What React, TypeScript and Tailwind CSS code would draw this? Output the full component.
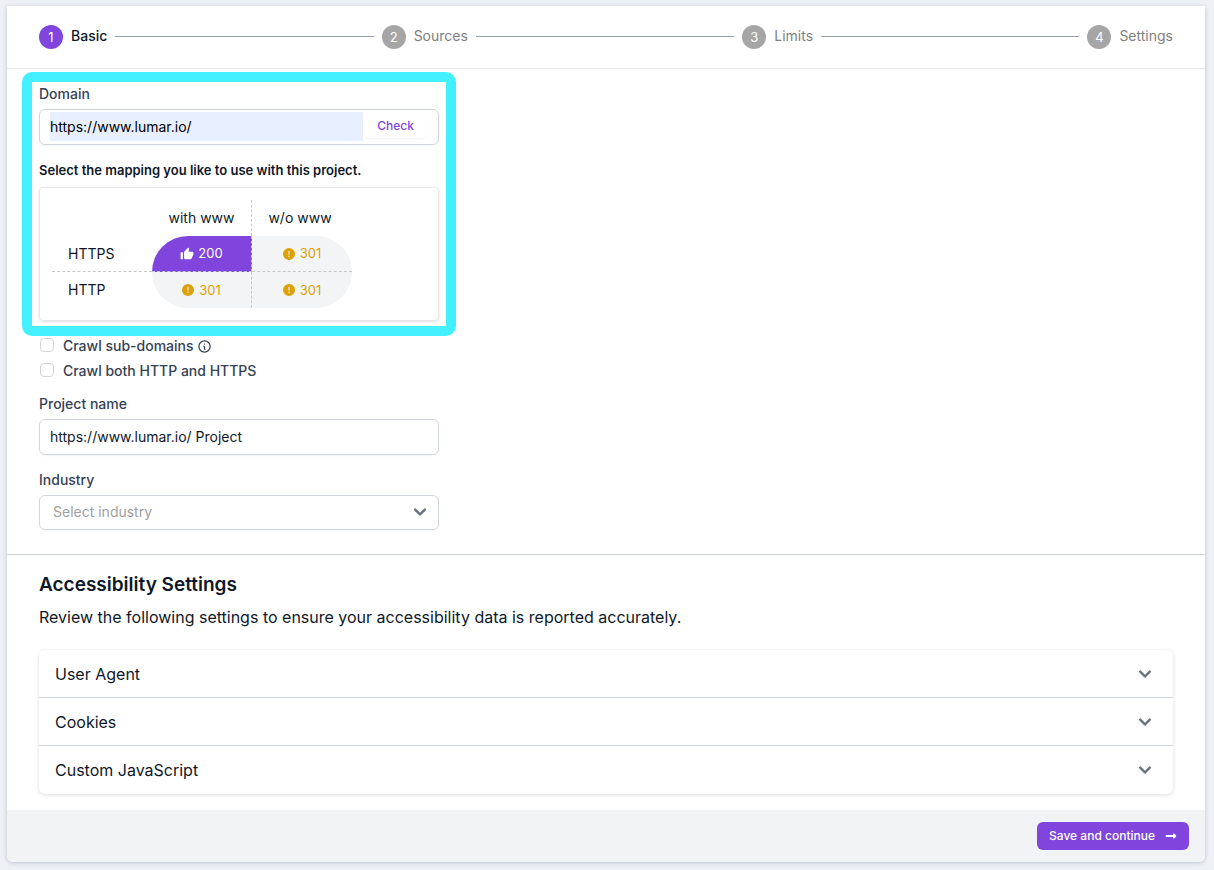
import React from "react";
import { BsExclamationCircleFill } from "react-icons/bs";
import { FaLongArrowAltRight } from "react-icons/fa";
import { HiChevronDown, HiOutlineInformationCircle } from "react-icons/hi";
import { MdThumbUp } from "react-icons/md";

const steps = ["Basic", "Sources", "Limits", "Settings"];
const accordions = ["User Agent", "Cookies", "Custom JavaScript"];

function Stepper() {
  return (
    <ol className="flex h-[63px] items-center gap-2 border-b border-gray-200 px-8 text-sm">
      {steps.map((name, i) => (
        <React.Fragment key={name}>
          {i > 0 && <li aria-hidden="true" className="mb-px h-px flex-1 bg-[#979fb0]" />}
          <li className="flex items-center gap-2" aria-current={i === 0 ? "step" : undefined}>
            <span
              className={
                i === 0
                  ? "flex size-6 items-center justify-center rounded-full bg-[#7f45dd] text-[13px] text-white"
                  : "flex size-6 items-center justify-center rounded-full bg-[#a6a6a6] text-[13px] text-white"
              }
            >
              {i + 1}
            </span>
            <span className={i === 0 ? "pb-0.5 font-medium text-gray-900" : "pb-0.5 text-[#7f7f7f]"}>{name}</span>
          </li>
        </React.Fragment>
      ))}
    </ol>
  );
}

function Redirect() {
  return (
    <span className="flex items-center justify-center gap-[5px] text-[13px] text-[#dca106]">
      <BsExclamationCircleFill className="size-3" />
      301
    </span>
  );
}

function MappingTable() {
  return (
    <div className="rounded border border-gray-200 p-3 shadow-sm">
      <table className="w-[300px] table-fixed border-separate border-spacing-0 text-sm text-gray-900">
        <thead>
          <tr className="h-9">
            <td />
            <th scope="col" className="border-r border-dashed border-[#c8c8c8] p-0 font-normal">
              with www
            </th>
            <th scope="col" className="p-0 pr-1 font-normal">
              w/o www
            </th>
          </tr>
        </thead>
        <tbody>
          <tr className="h-9">
            <th scope="row" className="border-b border-dashed border-[#c8c8c8] p-0 pl-4 text-left font-normal">
              HTTPS
            </th>
            <td className="rounded-tl-[36px] border-r border-b border-dashed border-[#c8c8c8] bg-[#7f45dd] p-0 text-white">
              <span className="flex items-center justify-center gap-1 text-[13px]">
                <MdThumbUp className="size-[14px]" />
                200
              </span>
            </td>
            <td className="rounded-tr-[36px] border-b border-dashed border-[#c8c8c8] bg-gray-100 p-0">
              <Redirect />
            </td>
          </tr>
          <tr className="h-9">
            <th scope="row" className="p-0 pl-4 text-left font-normal">
              HTTP
            </th>
            <td className="rounded-bl-[36px] border-r border-dashed border-[#c8c8c8] bg-gray-100 p-0">
              <Redirect />
            </td>
            <td className="rounded-br-[36px] bg-gray-100 p-0">
              <Redirect />
            </td>
          </tr>
        </tbody>
      </table>
    </div>
  );
}

export default function App() {
  return (
    <div className="min-h-screen bg-[#edf1f6] pt-[6px] pr-[9px] pb-2 pl-[7px] font-['Inter',sans-serif] text-gray-900">
      <main className="overflow-hidden rounded-b-md bg-white shadow-[0_1px_4px_rgba(60,60,90,0.25)]">
        <Stepper />

        <form className="flex flex-col border-b border-gray-300 px-8 pt-[15px] pb-6 text-sm">
          <div className="relative w-full max-w-[400px]">
            <div
              aria-hidden="true"
              className="pointer-events-none absolute -inset-x-[17px] -top-3 -bottom-[15px] rounded-[10px] border-10 border-[#42f0ff]"
            />
            <label htmlFor="domain" className="block font-medium text-gray-700">
              Domain
            </label>
            <div className="mt-[5px] flex h-9 items-center rounded-md border border-gray-300 px-[10px] pb-0.5 shadow-xs">
              <input
                id="domain"
                type="url"
                defaultValue="https://www.lumar.io/"
                className="h-[29px] min-w-0 flex-1 bg-[#e8effe] text-black outline-none"
              />
              <button type="button" className="h-6 rounded-md px-[14px] text-xs font-medium text-[#7f45dd] shadow-xs">
                Check
              </button>
            </div>
            <p className="mt-[15px] mb-[7px] text-[13px] leading-5 font-semibold">
              Select the mapping you like to use with this project.
            </p>
            <MappingTable />
          </div>

          <div className="mt-[15px] flex flex-col gap-[5px] font-medium text-gray-700">
            <div className="flex items-center gap-[3px]">
              <label className="flex items-center gap-[9px]">
                <input type="checkbox" className="mb-0.5 ml-px size-[14px] appearance-none rounded border border-gray-300" />
                Crawl sub-domains
              </label>
              <HiOutlineInformationCircle className="size-[15px]" />
            </div>
            <label className="flex items-center gap-[9px]">
              <input type="checkbox" className="mb-0.5 ml-px size-[14px] appearance-none rounded border border-gray-300" />
              Crawl both HTTP and HTTPS
            </label>
          </div>

          <label htmlFor="project" className="mt-[13px] font-medium text-gray-700">
            Project name
          </label>
          <input
            id="project"
            defaultValue="https://www.lumar.io/ Project"
            className="mt-[5px] h-9 w-full max-w-[400px] rounded-md border border-gray-300 px-[10px] pb-0.5 shadow-xs"
          />

          <label htmlFor="industry" className="mt-[15px] font-medium text-gray-700">
            Industry
          </label>
          <div className="mt-[5px] grid w-full max-w-[400px] items-center">
            <select
              id="industry"
              defaultValue=""
              className="col-start-1 row-start-1 h-[35px] w-full appearance-none rounded-md border border-gray-300 px-[13px] pb-0.5 text-[#a0a0a0] shadow-xs"
            >
              <option value="">Select industry</option>
            </select>
            <HiChevronDown className="pointer-events-none col-start-1 row-start-1 mr-[7px] mb-0.5 size-6 justify-self-end text-gray-500" />
          </div>
        </form>

        <section className="px-8 pt-4 pb-4">
          <h2 className="text-[19px] leading-7 font-semibold">Accessibility Settings</h2>
          <p className="mt-[6px] text-base">Review the following settings to ensure your accessibility data is reported accurately.</p>
          <div className="mt-[21px] rounded-md shadow-[0_1px_4px_rgba(0,0,0,0.14)]">
            {accordions.map((title) => (
              <button
                key={title}
                type="button"
                aria-expanded="false"
                className="flex h-12 w-full items-center justify-between border-gray-300 px-4 text-left text-base not-last:border-b"
              >
                {title}
                <HiChevronDown className="size-6 text-gray-500" />
              </button>
            ))}
          </div>
        </section>

        <footer className="flex justify-end bg-[#f1f3f5] px-4 py-3">
          <button
            type="button"
            className="flex h-7 items-center gap-[10px] rounded-md bg-[#7f45dd] px-3 text-xs font-medium text-white"
          >
            Save and continue
            <FaLongArrowAltRight className="size-3" />
          </button>
        </footer>
      </main>
    </div>
  );
}
